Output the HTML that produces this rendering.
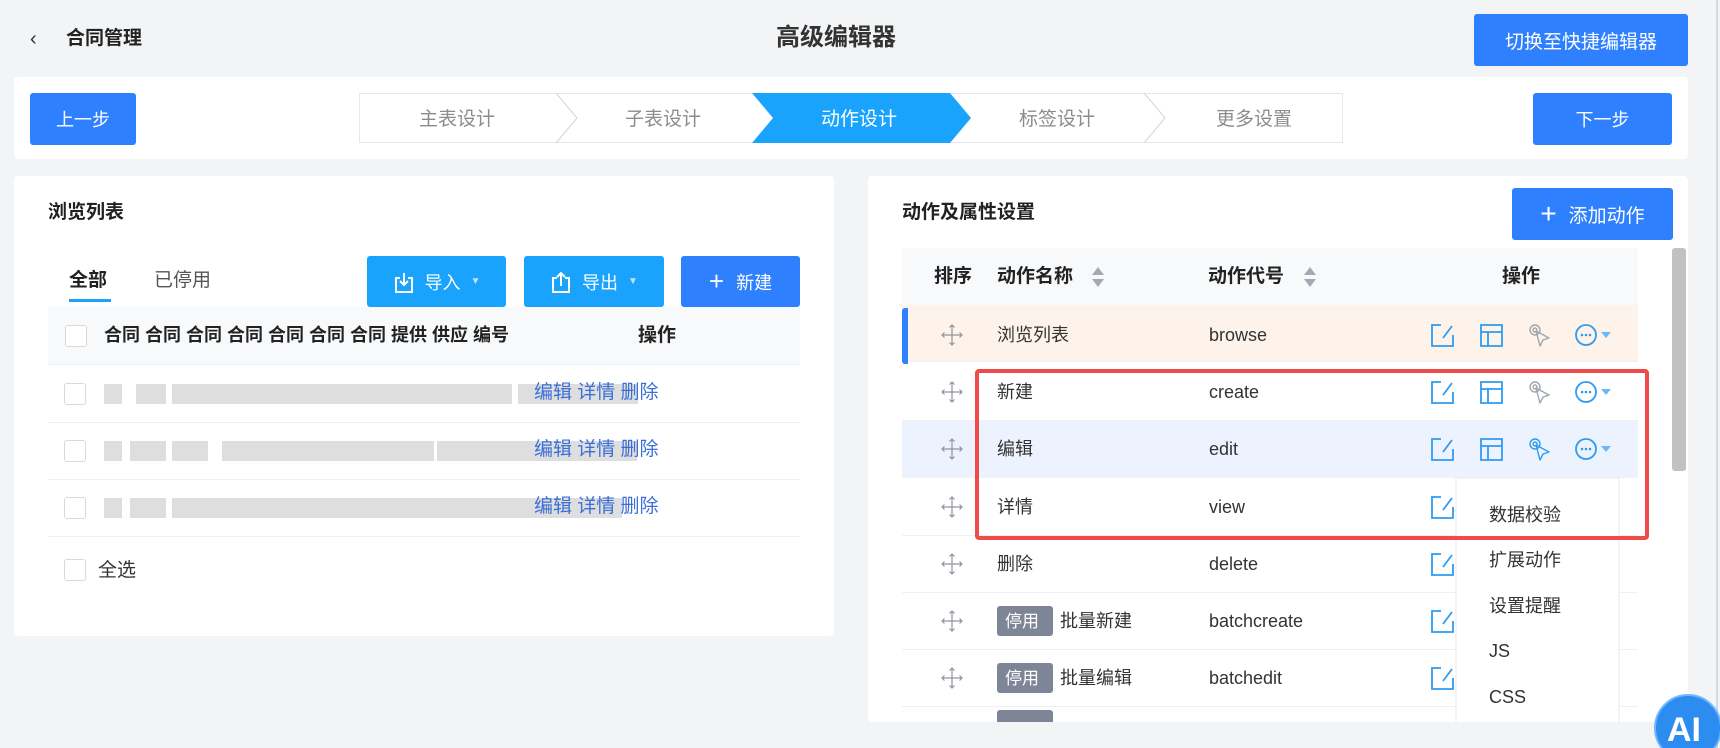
<!DOCTYPE html>
<html><head><meta charset="utf-8"><style>
*{box-sizing:border-box;margin:0;padding:0}
body{width:1720px;height:748px;background:#f3f4f6;font-family:"Liberation Sans","Noto Sans CJK SC",sans-serif;position:relative;overflow:hidden;color:#333}
.a{position:absolute}
.btn{position:absolute;color:#fff;border-radius:3px;display:flex;align-items:center;justify-content:center;font-size:18px}
.blue{background:#2f80fe}.lb{background:#1aa3fd}
.card{position:absolute;background:#fff;border-radius:4px}
.t{position:absolute;white-space:nowrap;line-height:1}
.cb{position:absolute;width:22px;height:22px;border:1px solid #d9d9d9;border-radius:3px;background:#fff}
.sep{position:absolute;height:1px;background:#eef0f3}
.lnk{color:#3a6fd8;font-size:19px}
.gb{position:absolute;height:20px;background:#dedede}
.row{position:absolute;left:902px;width:736px;height:57px;border-bottom:1px solid #eef0f3}
</style></head><body>
<div class="t" style="left:30px;top:29px;font-size:20px;color:#333">&#8249;</div>
<div class="t" style="left:66px;top:29px;font-size:19px;font-weight:bold;color:#222">合同管理</div>
<div class="t" style="left:776px;top:26px;font-size:24px;font-weight:bold;color:#333">高级编辑器</div>
<div class="btn blue" style="left:1474px;top:14px;width:214px;height:52px;font-size:19px">切换至快捷编辑器</div>
<div class="a" style="left:1716px;top:0;width:2px;height:748px;background:#d8d8d8"></div>

<div class="card" style="left:14px;top:77px;width:1674px;height:82px"></div>
<div class="btn blue" style="left:30px;top:93px;width:106px;height:52px">上一步</div>
<div class="btn blue" style="left:1533px;top:93px;width:139px;height:52px">下一步</div>
<svg class="a" style="left:359px;top:93px" width="984" height="50">
<rect x="0.5" y="0.5" width="983" height="49" fill="#fff" stroke="#e4e8ef"/>
<polygon points="393,0 591,0 612,25 591,50 393,50 414,25" fill="#1aa3fd"/>
<polyline points="197,0 218,25 197,50" fill="none" stroke="#d0d4da"/>
<polyline points="785,0 806,25 785,50" fill="none" stroke="#d0d4da"/>
<g font-size="19" fill="#8c8c8c" text-anchor="middle" font-family="Liberation Sans,Noto Sans CJK SC,sans-serif">
<text x="98" y="32">主表设计</text><text x="304" y="32">子表设计</text>
<text x="500" y="32" fill="#fff">动作设计</text><text x="698" y="32">标签设计</text><text x="895" y="32">更多设置</text></g>
</svg>

<div class="card" style="left:14px;top:176px;width:820px;height:460px"></div>
<div class="t" style="left:48px;top:203px;font-size:19px;font-weight:bold;color:#222">浏览列表</div>
<div class="t" style="left:69px;top:271px;font-size:19px;font-weight:bold;color:#222">全部</div>
<div class="a" style="left:69px;top:299px;width:42px;height:3px;background:#1aa3fd"></div>
<div class="t" style="left:154px;top:271px;font-size:19px;color:#555">已停用</div>
<div class="btn lb" style="left:367px;top:256px;width:139px;height:51px"><svg width="22" height="24" viewBox="0 0 22 24" style="margin-right:10px"><path d="M7 8H3v14h16V8h-4M11 3v12M7 11l4 4 4-4" fill="none" stroke="#fff" stroke-width="2"/></svg>导入<span style="font-size:10px;margin-left:10px;opacity:.7">▼</span></div>
<div class="btn lb" style="left:524px;top:256px;width:140px;height:51px"><svg width="22" height="24" viewBox="0 0 22 24" style="margin-right:10px"><path d="M7 8H3v14h16V8h-4M11 16V3M7 7l4-4 4 4" fill="none" stroke="#fff" stroke-width="2"/></svg>导出<span style="font-size:10px;margin-left:10px;opacity:.7">▼</span></div>
<div class="btn blue" style="left:681px;top:256px;width:119px;height:51px"><span style="font-size:26px;margin-right:12px;font-weight:300">+</span>新建</div>
<div class="a" style="left:48px;top:307px;width:752px;height:57px;background:#f8f9fb"></div>
<div class="cb" style="left:65px;top:325px"></div>
<div class="t" style="left:104px;top:326px;font-size:18px;font-weight:bold;color:#222">合同 合同 合同 合同 合同 合同 合同 提供 供应 编号</div>
<div class="a" style="left:510px;top:320px;width:130px;height:30px;background:#f8f9fb"></div>
<div class="t" style="left:638px;top:326px;font-size:19px;font-weight:bold;color:#222">操作</div>
<div class="sep" style="left:48px;top:364px;width:752px"></div>
<div class="sep" style="left:48px;top:422px;width:752px"></div>
<div class="sep" style="left:48px;top:479px;width:752px"></div>
<div class="sep" style="left:48px;top:536px;width:752px"></div>
<div class="cb" style="left:64px;top:383px"></div><div class="cb" style="left:64px;top:440px"></div><div class="cb" style="left:64px;top:497px"></div><div class="cb" style="left:64px;top:559px"></div>
<div class="gb" style="left:104px;top:384px;width:18px"></div><div class="gb" style="left:136px;top:384px;width:30px"></div><div class="gb" style="left:172px;top:384px;width:340px"></div><div class="gb" style="left:518px;top:384px;width:120px"></div>
<div class="gb" style="left:104px;top:441px;width:18px"></div><div class="gb" style="left:130px;top:441px;width:36px"></div><div class="gb" style="left:172px;top:441px;width:36px"></div><div class="gb" style="left:222px;top:441px;width:212px"></div><div class="gb" style="left:437px;top:441px;width:200px"></div>
<div class="gb" style="left:104px;top:498px;width:18px"></div><div class="gb" style="left:130px;top:498px;width:36px"></div><div class="gb" style="left:172px;top:498px;width:450px"></div>
<div class="t lnk" style="left:534px;top:383px">编辑 详情 删除</div>
<div class="t lnk" style="left:534px;top:440px">编辑 详情 删除</div>
<div class="t lnk" style="left:534px;top:497px">编辑 详情 删除</div>
<div class="t" style="left:98px;top:561px;font-size:19px;color:#333">全选</div>

<div class="card" style="left:868px;top:176px;width:820px;height:546px"></div>
<div class="t" style="left:902px;top:203px;font-size:19px;font-weight:bold;color:#222">动作及属性设置</div>
<div class="btn blue" style="left:1512px;top:188px;width:161px;height:52px;font-size:19px"><span style="font-size:28px;margin-right:12px;font-weight:300">+</span>添加动作</div>
<div class="a" style="left:1672px;top:248px;width:14px;height:223px;background:#c1c1c1;border-radius:3px"></div>
<div class="a" style="left:902px;top:248px;width:736px;height:57px;background:#f8f9fb"></div>
<div class="t" style="left:934px;top:267px;font-size:19px;font-weight:bold;color:#222">排序</div>
<div class="t" style="left:997px;top:267px;font-size:19px;font-weight:bold;color:#222">动作名称</div>
<div class="t" style="left:1208px;top:267px;font-size:19px;font-weight:bold;color:#222">动作代号</div>
<div class="t" style="left:1502px;top:267px;font-size:19px;font-weight:bold;color:#222">操作</div>
<svg class="a" style="left:1090px;top:265px" width="16" height="24"><path d="M8 2l6 8H2zM8 22l6-8H2z" fill="#a3a9b3"/></svg>
<svg class="a" style="left:1302px;top:265px" width="16" height="24"><path d="M8 2l6 8H2zM8 22l6-8H2z" fill="#a3a9b3"/></svg>

<div class="row" style="top:305px;background:#fdf3ea"></div>
<div class="a" style="left:902px;top:308px;width:6px;height:56px;background:#2f80fe;border-radius:3px 0 0 3px"></div>
<div class="row" style="top:364px"></div>
<div class="row" style="top:421px;background:#edf3fe"></div>
<div class="row" style="top:479px"></div>
<div class="row" style="top:536px"></div>
<div class="row" style="top:593px"></div>
<div class="row" style="top:650px"></div>
<div class="a" style="left:997px;top:710px;width:56px;height:12px;background:#7d8596;border-radius:3px 3px 0 0"></div>

<svg class="a" style="left:0;top:0" width="1720" height="748" font-family="Liberation Sans,Noto Sans CJK SC,sans-serif">
<defs>
<g id="mv"><path d="M11 1v20M1 11h20M8.5 3.5L11 1l2.5 2.5M8.5 18.5L11 21l2.5-2.5M3.5 8.5L1 11l2.5 2.5M18.5 8.5L21 11l-2.5 2.5" fill="none" stroke="#8f959e" stroke-width="1.2"/></g>
<g id="ed"><path d="M10 1H1v21h21V11M21 2l-9 12" fill="none" stroke="#2f9bf0" stroke-width="1.8"/></g>
<g id="ly"><path d="M1 1h21v21H1zM1 8h21M8 8v14" fill="none" stroke="#2f9bf0" stroke-width="1.8"/></g>
<g id="mo"><circle cx="11" cy="11" r="10" fill="none" stroke="#2f9bf0" stroke-width="1.8"/><circle cx="7" cy="11" r="1.3" fill="#2f9bf0"/><circle cx="11" cy="11" r="1.3" fill="#2f9bf0"/><circle cx="15" cy="11" r="1.3" fill="#2f9bf0"/><path d="M26 8h10l-5 6z" fill="#6cb8f5"/></g>
<g id="pt"><circle cx="6" cy="6" r="5"/><circle cx="6" cy="6" r="2"/><path d="M7 7l4 15 3-6 6-2z"/></g>
</defs>
<g font-size="18" fill="#333">
<use href="#mv" x="941" y="324"/><text x="997" y="341">浏览列表</text><text x="1209" y="341">browse</text>
<use href="#mv" x="941" y="381"/><text x="997" y="398">新建</text><text x="1209" y="398">create</text>
<use href="#mv" x="941" y="438"/><text x="997" y="455">编辑</text><text x="1209" y="455">edit</text>
<use href="#mv" x="941" y="496"/><text x="997" y="513">详情</text><text x="1209" y="513">view</text>
<use href="#mv" x="941" y="553"/><text x="997" y="570">删除</text><text x="1209" y="570">delete</text>
<use href="#mv" x="941" y="610"/><rect x="997" y="606" width="56" height="30" rx="3" fill="#7d8596"/><text x="1005" y="627" fill="#fff" font-size="17">停用</text><text x="1060" y="627">批量新建</text><text x="1209" y="627">batchcreate</text>
<use href="#mv" x="941" y="667"/><rect x="997" y="663" width="56" height="30" rx="3" fill="#7d8596"/><text x="1005" y="684" fill="#fff" font-size="17">停用</text><text x="1060" y="684">批量编辑</text><text x="1209" y="684">batchedit</text>
</g>
<use href="#ed" x="1431" y="324"/><use href="#ly" x="1480" y="324"/><use href="#mo" x="1575" y="324"/>
<use href="#ed" x="1431" y="381"/><use href="#ly" x="1480" y="381"/><use href="#mo" x="1575" y="381"/>
<use href="#ed" x="1431" y="438"/><use href="#ly" x="1480" y="438"/><use href="#mo" x="1575" y="438"/>
<use href="#ed" x="1431" y="496"/><use href="#ed" x="1431" y="553"/><use href="#ed" x="1431" y="610"/><use href="#ed" x="1431" y="667"/>
<g fill="none" stroke-width="1.4" stroke-linejoin="round">
<use href="#pt" x="1529" y="324" stroke="#a0a6ae"/>
<use href="#pt" x="1529" y="381" stroke="#a0a6ae"/>
<use href="#pt" x="1529" y="438" stroke="#2f9bf0"/>
</g>
<rect x="1456" y="478" width="163" height="250" fill="#fff" stroke="#e6e8eb"/>
<g font-size="18" fill="#333"><text x="1489" y="521">数据校验</text><text x="1489" y="566">扩展动作</text><text x="1489" y="612">设置提醒</text><text x="1489" y="657">JS</text><text x="1489" y="703">CSS</text></g>
<rect x="977" y="371" width="670" height="167" fill="none" stroke="#f04a4a" stroke-width="4" rx="2"/>
<rect x="0" y="722" width="1716" height="26" fill="#f3f4f6"/>
<circle cx="1688" cy="728" r="33" fill="#2d8cf0"/><circle cx="1688" cy="728" r="33" fill="none" stroke="#6fb7ff" stroke-width="2"/>
<text x="1667" y="741" font-size="34" font-weight="bold" fill="#fff">AI</text>
</svg>
</body></html>
